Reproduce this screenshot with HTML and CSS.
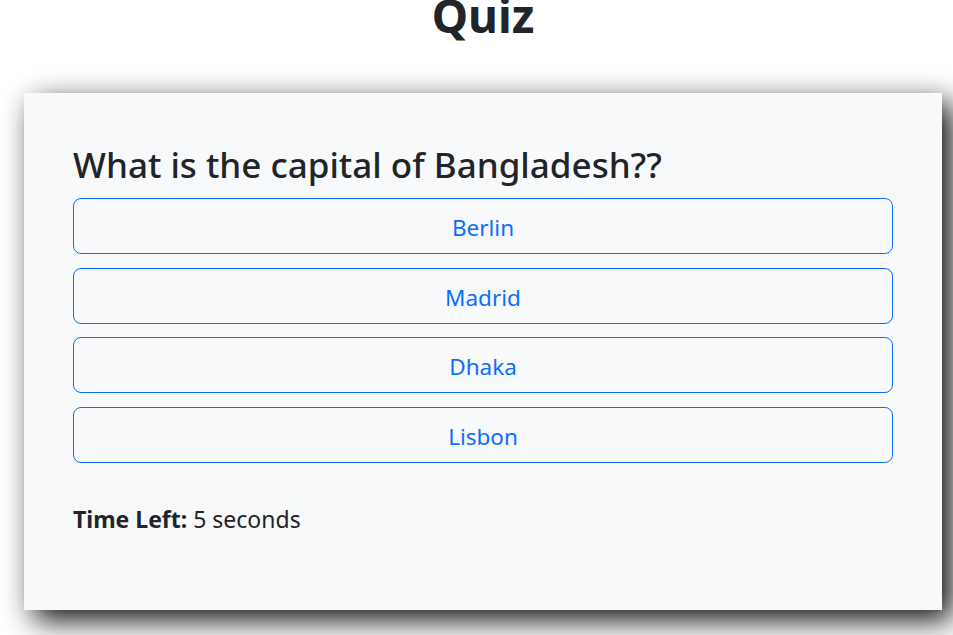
FILE: index.html
```html
<!DOCTYPE html>
<html lang="en">
<head>
<meta charset="utf-8">
<title>Quiz</title>
<link rel="stylesheet" href="styles.css">
</head>
<body>
<div class="page">
  <h1 class="title">Quiz</h1>
  <div class="card">
    <h3 class="question">What is the capital of Bangladesh??</h3>
    <div class="options">
      <button class="option">Berlin</button>
      <button class="option">Madrid</button>
      <button class="option">Dhaka</button>
      <button class="option">Lisbon</button>
    </div>
    <p class="timer"><strong>Time Left:</strong> 5 seconds</p>
  </div>
</div>
</body>
</html>
```
FILE: styles.css
```css
html {
  overflow: hidden;
}
body {
  margin: 0;
  padding: 0;
  background: #fff;
  font-family: "Noto Sans", "Open Sans", sans-serif;
  color: #212529;
}
.page {
  padding: 0 11px 40px 24px;
}
.title {
  margin: -12.5px 0 0;
  font-size: 46px;
  line-height: 1.2;
  font-weight: 700;
  text-align: center;
}
.card {
  margin-top: 50.3px;
  background: #f8f9fa;
  padding: 50px 49px 49px 49px;
  box-shadow: 10px 10px 28px rgba(0, 0, 0, 0.95);
}
.question {
  margin: 0 0 11.8px;
  font-size: 35px;
  line-height: 43.2px;
  font-weight: 500;
}
.options {
  display: flex;
  flex-direction: column;
  gap: 13.6px;
}
.option {
  display: block;
  width: 100%;
  height: 56px;
  padding: 11px 16px 7px;
  font-family: inherit;
  font-size: 22.5px;
  line-height: 36px;
  color: #0d6efd;
  background: transparent;
  border: 1px solid #0d6efd;
  border-radius: 8px;
  text-align: center;
}
.timer {
  margin: 38px 0 24px;
  font-size: 23px;
  line-height: 36px;
}
.timer strong {
  font-weight: 700;
}
```
